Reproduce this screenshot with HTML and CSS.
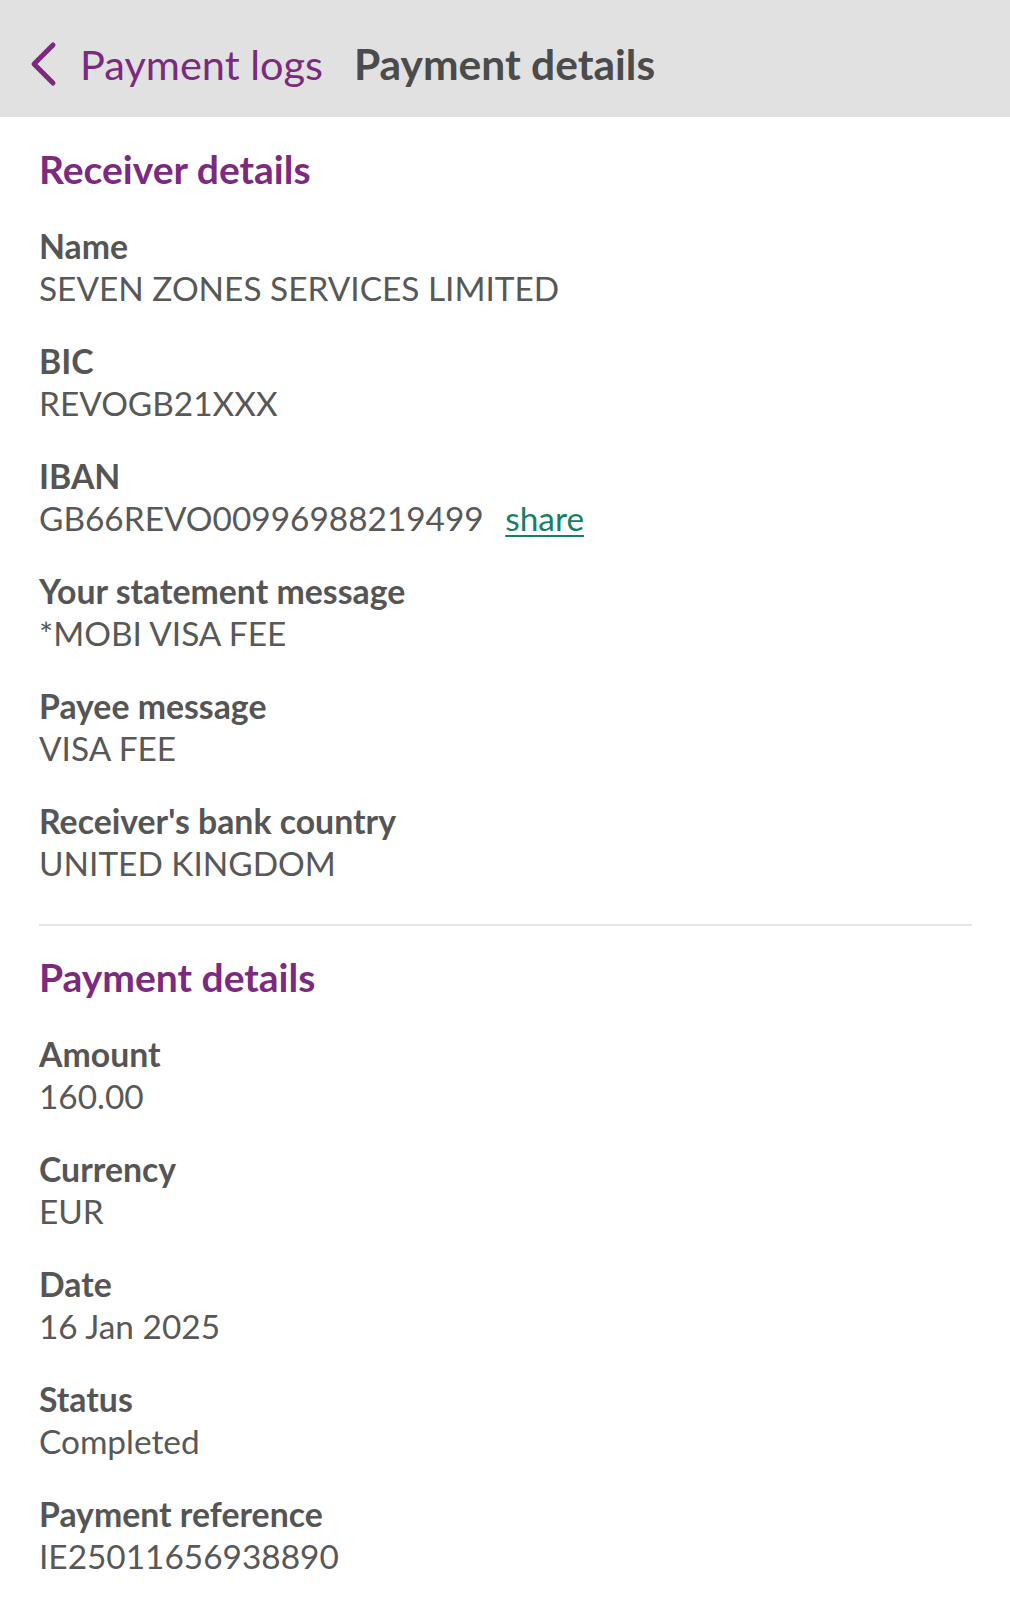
FILE: index.html
```html
<!DOCTYPE html>
<html>
<head>
<meta charset="utf-8">
<link rel="stylesheet" href="styles.css">
</head>
<body>
<header class="topbar">
  <a class="back">
    <svg class="chev" width="30" height="46" viewBox="0 0 30 46"><path d="M25 4 L6 23 L25 42" fill="none" stroke="#7b2a7f" stroke-width="5" stroke-linecap="round" stroke-linejoin="round"/></svg>
    <span class="back-text">Payment logs</span>
  </a>
  <h1 class="title">Payment details</h1>
</header>
<main class="content">
  <section class="section">
    <h2 class="heading">Receiver details</h2>
    <div class="item"><div class="label">Name</div><div class="value">SEVEN ZONES SERVICES LIMITED</div></div>
    <div class="item"><div class="label">BIC</div><div class="value">REVOGB21XXX</div></div>
    <div class="item"><div class="label">IBAN</div><div class="value">GB66REVO00996988219499 <a class="share">share</a></div></div>
    <div class="item"><div class="label">Your statement message</div><div class="value">*MOBI VISA FEE</div></div>
    <div class="item"><div class="label">Payee message</div><div class="value">VISA FEE</div></div>
    <div class="item"><div class="label">Receiver's bank country</div><div class="value">UNITED KINGDOM</div></div>
  </section>
  <hr class="divider">
  <section class="section">
    <h2 class="heading">Payment details</h2>
    <div class="item"><div class="label">Amount</div><div class="value">160.00</div></div>
    <div class="item"><div class="label">Currency</div><div class="value">EUR</div></div>
    <div class="item"><div class="label">Date</div><div class="value">16 Jan 2025</div></div>
    <div class="item"><div class="label">Status</div><div class="value">Completed</div></div>
    <div class="item"><div class="label">Payment reference</div><div class="value">IE25011656938890</div></div>
  </section>
</main>
</body>
</html>
```
FILE: styles.css
```css
html, body {
  margin: 0;
  padding: 0;
  background: #ffffff;
  font-family: Lato, "Open Sans", sans-serif;
}
.topbar {
  height: 117px;
  background: #e1e1e1;
  display: flex;
  align-items: center;
  padding: 10px 0 0 28px;
  box-sizing: border-box;
}
.back {
  display: flex;
  align-items: center;
  gap: 22px;
  color: #7b2a7f;
}
.chev { display: block; }
.back-text {
  font-size: 41.5px;
  font-weight: 400;
  color: #7b2a7f;
}
.title {
  margin: 0 0 0 31px;
  font-size: 42.5px;
  font-weight: 700;
  color: #4b4b4b;
}
.content {
  padding: 30px 38px 0 39px;
}
.heading {
  margin: 0 0 34px;
  font-size: 39px;
  line-height: 44px;
  font-weight: 700;
  color: #7b2a7f;
}
.item { margin-bottom: 31px; }
.item:last-child { margin-bottom: 0; }
.label {
  font-size: 33.8px;
  line-height: 42px;
  font-weight: 700;
  color: #555555;
}
.value {
  font-size: 33.4px;
  line-height: 42px;
  font-weight: 400;
  color: #585858;
}
.share {
  margin-left: 13px;
  color: #158062;
  text-decoration: underline;
  text-decoration-thickness: 2px;
  text-underline-offset: 4px;
}
.divider {
  border: 0;
  height: 2px;
  background: #e6e6e6;
  margin: 40px 0 29px;
}
```
